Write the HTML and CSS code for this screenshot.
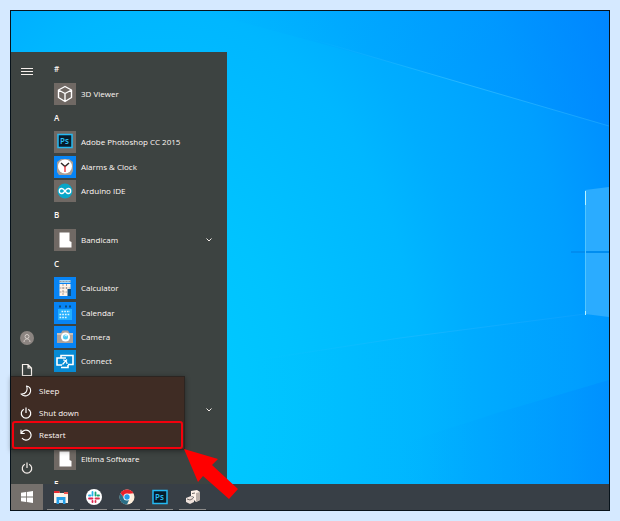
FILE: index.html
```html
<!DOCTYPE html>
<html lang="en">
<head>
<meta charset="utf-8">
<title>Desktop</title>
<link rel="stylesheet" href="styles.css">
</head>
<body>
<main class="desktop">
  <svg class="wallpaper" viewBox="0 0 598 473" preserveAspectRatio="none" aria-hidden="true">
    <defs>
      <radialGradient id="glow" gradientUnits="userSpaceOnUse" cx="0" cy="0" r="1" gradientTransform="translate(150 400) scale(520 800)">
        <stop offset="0" stop-color="#00ccff"/>
        <stop offset=".26" stop-color="#00c3ff"/>
        <stop offset=".5" stop-color="#00b7ff"/>
        <stop offset=".6" stop-color="#00adff"/>
        <stop offset=".8" stop-color="#009fff"/>
        <stop offset="1" stop-color="#0088ff"/>
      </radialGradient>
      <linearGradient id="beam" x1="0" x2="1" y1="0" y2="0">
        <stop offset="0" stop-color="#00b4ff" stop-opacity="0"/>
        <stop offset="1" stop-color="#009cff" stop-opacity=".75"/>
      </linearGradient>
      <linearGradient id="low" x1="0" x2="1" y1="0" y2="0">
        <stop offset="0" stop-color="#00a8ff" stop-opacity="0"/>
        <stop offset="1" stop-color="#0088ff"/>
      </linearGradient>
      <linearGradient id="upper" x1="0" x2="1" y1="0" y2="0">
        <stop offset="0" stop-color="#009cff" stop-opacity="0"/>
        <stop offset="1" stop-color="#0084ff" stop-opacity=".45"/>
      </linearGradient>
      <linearGradient id="ray" x1="0" x2="1" y1="0" y2="0">
        <stop offset="0" stop-color="#20bcff" stop-opacity="0"/>
        <stop offset=".5" stop-color="#30bcff"/>
        <stop offset="1" stop-color="#18a4ff"/>
      </linearGradient>
    </defs>
    <rect width="598" height="473" fill="url(#glow)"/>
    <path d="M190 0H598V115L389 54Z" fill="url(#upper)"/>
    <path d="M598 115L389 54L300 28" fill="none" stroke="url(#ray)" opacity=".8"/>
    <path d="M240 350L389 327L574 303L598 306V473H240Z" fill="url(#beam)" opacity=".3"/>
    <path d="M240 350L389 327L574 303" fill="none" stroke="url(#ray)" opacity=".4"/>
    <path d="M390 433L489 401L598 369V473H390Z" fill="url(#low)" opacity=".5"/>
    <path d="M574 179L598 176V240H574Z" fill="#2bacff"/>
    <path d="M574 242H598V306L574 303Z" fill="#2bacff"/>
    <path d="M560 240H598V242H560Z" fill="#008df0"/>
    <path d="M574.5 180V303" stroke="#50c4ff"/>
    <path d="M574.5 180V194M574.5 300V304" stroke="#b8f4ff"/>
  </svg>

  <div class="workspace">
    <section class="start" aria-label="Start">
      <nav class="rail" aria-label="Start shortcuts">
        <button class="rail-button first" aria-label="Expand"><svg width="12" height="8" viewBox="0 0 12 8"><path d="M0 1.500H12M0 4.500H12M0 7.500H12" stroke="#f5eeea" fill="none"/></svg></button>
        <button class="rail-button" aria-label="Account"><svg width="14" height="14" viewBox="0 0 14 14"><circle cx="7" cy="7" r="7" fill="#8c8581"/><circle cx="7" cy="5.500" r="2" fill="none" stroke="#d5cdc8"/><path d="M4 11C4 6.800 10 6.800 10 11" fill="none" stroke="#d5cdc8"/></svg></button>
        <button class="rail-button" aria-label="Documents"><svg width="12" height="14" viewBox="0 0 12 14"><path d="M1.500 1.500H7L10.500 5V12.500H1.500ZM7 1.500V5H10.500" fill="none" stroke="#f5eeea" stroke-width="1.200"/></svg></button>
        <button class="rail-button last" aria-label="Power"><svg width="12" height="12" viewBox="0 0 12 12"><path d="M3.800 2.200A4.700 4.700 0 1 0 8.200 2.200M6 .5V6" fill="none" stroke="#f5eeea" stroke-width="1.200"/></svg></button>
      </nav>

      <div class="apps">
        <h2 class="letter">#</h2>
        <button class="app"><svg class="tile" viewBox="0 0 22 22"><path d="M11 3.500L17.500 7V14.500L11 18.500L4.500 14.500V7ZM4.500 7L11 10.500L17.500 7M11 10.500V18" fill="none" stroke="#fff" stroke-width="1.400" stroke-linejoin="round"/></svg><span>3D Viewer</span></button>
        <h2 class="letter">A</h2>
        <button class="app"><svg class="tile" viewBox="0 0 22 22"><rect x="4" y="3.500" width="14" height="13" fill="#071c2b" stroke="#24b9f2" stroke-width="1.500"/><text class="ps" x="6" y="13">Ps</text></svg><span>Adobe Photoshop CC 2015</span></button>
        <button class="app"><svg class="tile blue" viewBox="0 0 22 22"><path d="M3 6L7 3H15L19 6V15L17 19H5L3 16Z" fill="#a99d96"/><circle cx="11" cy="10.500" r="7" fill="#fff"/><path d="M7 7L11 10.500L15 7" fill="none" stroke="#302b29" stroke-width="1.500"/><path d="M11 10V16" stroke="#e62b32" stroke-width="1.300"/></svg><span>Alarms &amp; Clock</span></button>
        <button class="app"><svg class="tile" viewBox="0 0 22 22"><circle cx="11" cy="11" r="7.500" fill="#0aa6c7"/><path d="M11 11C9.500 9 8.800 8.500 7.800 8.500A2.500 2.500 0 0 0 7.800 13.500C8.800 13.500 9.500 13 11 11C12.500 9 13.200 8.500 14.200 8.500A2.500 2.500 0 0 1 14.200 13.500C13.200 13.500 12.500 13 11 11" fill="none" stroke="#fff" stroke-width="1.300"/></svg><span>Arduino IDE</span></button>
        <h2 class="letter">B</h2>
        <button class="app"><svg class="tile" viewBox="0 0 22 22"><path d="M5.500 3.500H15.500V12L17.500 13V18.500H5.500Z" fill="#fff"/></svg><span>Bandicam</span><svg class="chevron" viewBox="0 0 6 4"><path d="M.5 .5L3 3L5.500 .5"/></svg></button>
        <h2 class="letter">C</h2>
        <button class="app"><svg class="tile blue" viewBox="0 0 22 22"><path d="M5.500 3H16.500V6H5.500Z" fill="#9fd3f5"/><path d="M5.500 7H16.500V19H5.500Z" fill="#fff3e8"/><path d="M5.500 4.500H16.500M9 7V19M12.500 7V12M5.500 11H16.500M5.500 15H13" stroke="#948984" stroke-width=".8" stroke-dasharray="2 1"/><path d="M13.500 12H17V19H13.500Z" fill="#104f80"/></svg><span>Calculator</span></button>
        <button class="app"><svg class="tile blue" viewBox="0 0 22 22"><path d="M4 7H18V18H4Z" fill="#24afff"/><path d="M5 4.500H7M11 4.500H13M15 4.500H17" stroke="#0b4c7c" stroke-width="2"/><path d="M7.500 9.500H16M5.500 12.500H16M5.500 15.500H13" stroke="#dcf5ff" stroke-width="1.700" stroke-dasharray="1.700 1"/></svg><span>Calendar</span></button>
        <button class="app"><svg class="tile blue" viewBox="0 0 22 22"><path d="M3 7H7L8.500 4.500H14L15.500 7H19V17H3Z" fill="#aca19b"/><path d="M3 7H19V9H3Z" fill="#c9beb8"/><circle cx="11.500" cy="11" r="4.500" fill="#fff"/><circle cx="11.500" cy="11" r="2.500" fill="#4dcaf2"/><path d="M10.500 10A2 2 0 0 1 13 10" stroke="#fff" fill="none"/></svg><span>Camera</span></button>
        <button class="app"><svg class="tile cyan" viewBox="0 0 22 22"><path d="M7 8V5.500H19V14.500H14M12 8H3V15H8M7 17.500H14V15" fill="none" stroke="#fff" stroke-width="1.600"/><path d="M8.500 14.500L13 9.500M9 10C12 10 13 12 13 14" fill="none" stroke="#fff" stroke-width="1.200"/></svg><span>Connect</span></button>
        <h2 class="letter"></h2>
        <button class="app" aria-label="App folder"><svg class="chevron" viewBox="0 0 6 4"><path d="M.5 .5L3 3L5.500 .5"/></svg></button>
        <h2 class="letter"></h2>
        <button class="app"><svg class="tile" viewBox="0 0 22 22"><path d="M5.500 3.500H15.500V12L17.500 13V18.500H5.500Z" fill="#fff"/></svg><span>Eltima Software</span></button>
        <h2 class="letter cut">F</h2>
      </div>

      <div class="power-menu" role="menu">
        <button class="power-item" role="menuitem"><svg width="12" height="12" viewBox="0 0 12 12"><path d="M6.500 1C9.500 1.500 11 3.500 10.500 6.500C9.800 10.800 4 12.500 1 9C5 9.500 8.500 6 6.500 1Z" fill="none" stroke="#fff" stroke-width="1.100" stroke-linejoin="round"/></svg>Sleep</button>
        <button class="power-item" role="menuitem"><svg width="12" height="12" viewBox="0 0 12 12"><path d="M3.800 2.200A4.700 4.700 0 1 0 8.200 2.200M6 .5V6" fill="none" stroke="#fff" stroke-width="1.200"/></svg>Shut down</button>
        <button class="power-item marked" role="menuitem"><svg width="12" height="12" viewBox="0 0 12 12"><path d="M1.500 4A5 5 0 1 1 2 9M1 .8V4.500H4.700" fill="none" stroke="#fff" stroke-width="1.200"/></svg>Restart</button>
      </div>

      <svg class="arrow" width="55" height="50" viewBox="0 0 55 50" aria-hidden="true"><path d="M0 0L34 10L28 16L54 40L45 50L19 27L14 33Z" fill="#f00"/></svg>
    </section>
  </div>

  <footer class="taskbar">
    <button class="start-button" aria-label="Start"><svg width="12" height="12" viewBox="0 0 12 12"><path d="M0 1.800L5 1V5.600H0ZM5.800 .9L12 0V5.600H5.800ZM0 6.400H5V11L0 10.300ZM5.800 6.400H12V12L5.800 11.100Z" fill="#fff"/></svg></button>
    <div class="tasks">
      <button class="task" aria-label="File Explorer"><svg width="16" height="16" viewBox="0 0 16 16"><path d="M1 2H6L7 4H15V14H1Z" fill="#fff1e4"/><path d="M1 2H6L7 4H1Z" fill="#e62c33"/><path d="M11 3H15V5H11Z" fill="#ef5550"/><path d="M3.500 8H12.500V15H10V11H6V15H3.500Z" fill="#249fe8"/><path d="M6 11H10V14H6Z" fill="#bce6ff"/></svg></button>
      <button class="task" aria-label="Slack"><svg width="16" height="16" viewBox="0 0 16 16"><circle cx="8" cy="8" r="8" fill="#fff"/><g fill="none" stroke-width="1.800" stroke-linecap="round"><path d="M6.500 3V6.500M3 6.500H4.500" stroke="#26b5e8"/><path d="M9.500 3.500V6.500M11.500 6.500H13" stroke="#18a878"/><path d="M3 9.500H6.500M6.500 12V13" stroke="#e0204f"/><path d="M9.500 9.500H13M9.500 12V13" stroke="#d9334d"/></g></svg></button>
      <button class="task" aria-label="Chrome"><svg width="16" height="16" viewBox="0 0 16 16"><circle cx="8" cy="8" r="7.500" fill="#fff0dd"/><path d="M1.500 4.200A7.500 7.500 0 0 1 14.500 4.200L8 5L5 9Z" fill="#e9222b"/><path d="M1.500 4.200A7.500 7.500 0 0 0 8 15.500L10.500 10L5 9Z" fill="#2b6f86"/><circle cx="8" cy="8" r="3.600" fill="#fff"/><circle cx="8" cy="8" r="2.700" fill="#239be9"/></svg></button>
      <button class="task" aria-label="Photoshop"><svg width="16" height="16" viewBox="0 0 16 16"><rect x="1" y="1.500" width="14" height="13" fill="#071c2b" stroke="#24b9f2" stroke-width="1.500"/><text class="ps" x="3" y="11">Ps</text></svg></button>
      <button class="task" aria-label="Capture tool"><svg width="16" height="16" viewBox="0 0 16 16"><path d="M6 2L12 1L15 3V11L11 13L9 11V8L6 7Z" fill="#fff3ea"/><path d="M11 4L15 3V11L11 13Z" fill="#bbb0aa"/><path d="M1 9L6 7L9 9V13L5 15L1 13Z" fill="#eee2dc"/><path d="M2 10L5 11L8 9.500" fill="none" stroke="#756d69"/><path d="M7 4.500L10 4" stroke="#6c6663"/></svg></button>
    </div>
  </footer>
</main>
</body>
</html>
```
FILE: styles.css
```css
* {
  box-sizing: border-box;
}

body {
  margin: 0;
  padding: 10px;
  background: #d5e9ff;
  color: #fff8f4;
  font: 500 8px/12px "Open Sans", "Noto Sans", sans-serif;
}

button {
  margin: 0;
  padding: 0;
  border: 0;
  background: none;
  color: inherit;
  font: inherit;
  text-align: left;
}

svg {
  display: block;
  flex: none;
}

.desktop {
  position: relative;
  display: flex;
  flex-direction: column;
  min-height: calc(100vh - 20px);
  border: 1px solid #07121a;
}

.wallpaper {
  position: absolute;
  inset: 0;
  width: 100%;
  height: calc(100% - 26px);
}

.workspace {
  position: relative;
  z-index: 1;
  display: flex;
  flex: 1;
  padding-top: 41px;
}

.start {
  position: relative;
  display: flex;
  width: 216px;
  background: #3d4341;
}

.rail {
  display: flex;
  flex-direction: column;
  width: 32px;
  padding: 7px 0 4px;
}

.rail-button {
  display: grid;
  place-items: center;
  height: 24px;
  margin-bottom: 8px;
}

.rail-button.first {
  margin-bottom: auto;
}

.rail-button.last {
  margin: 66px 0 0;
}

.apps {
  display: grid;
  flex: 1;
  grid-template-rows: repeat(17, minmax(0, 24fr)) minmax(0, 13fr);
  padding: 5px 15px 0 11px;
}

.letter {
  display: flex;
  align-items: center;
  margin: 0;
  font-size: 8px;
  font-weight: 600;
}

.letter.cut {
  align-items: flex-start;
  contain: size;
  padding-top: 7px;
  overflow: hidden;
}

.app {
  display: flex;
  align-items: center;
  gap: 5px;
  white-space: nowrap;
}

.tile {
  width: 22px;
  height: 22px;
  background: #706964;
}

.tile.blue {
  background: #0784f5;
}

.tile.cyan {
  background: #078bd5;
}

.ps {
  fill: #2cc2fa;
  font: 600 8px "Open Sans", sans-serif;
}

.chevron {
  width: 6px;
  height: 4px;
  margin-left: auto;
  fill: none;
  stroke: #f5eeea;
}

.power-menu {
  position: absolute;
  bottom: 34px;
  left: 0;
  display: flex;
  flex-direction: column;
  width: 174px;
  padding: 3px 1px 0;
  border: 1px solid #2c2521;
  border-left: 0;
  background: #3f2c24;
  box-shadow: 0 1px 5px #0006;
}

.power-item {
  display: flex;
  align-items: center;
  gap: 7px;
  height: 22px;
  padding-left: 8px;
}

.power-item.marked {
  height: 28px;
  margin-top: -3px;
  padding-left: 6px;
  border: 2px solid #f4000c;
  border-radius: 3px;
}

.arrow {
  position: absolute;
  top: 397px;
  left: 173px;
}

.taskbar {
  position: relative;
  display: flex;
  height: 26px;
  background: #383f46;
}

.start-button {
  display: grid;
  place-items: center;
  width: 32px;
  background: #75706c;
}

.tasks {
  display: flex;
  gap: 6px;
  padding-left: 4px;
}

.task {
  display: grid;
  place-items: center;
  width: 27px;
  border-bottom: 1px solid #8c8b8a;
}
```
